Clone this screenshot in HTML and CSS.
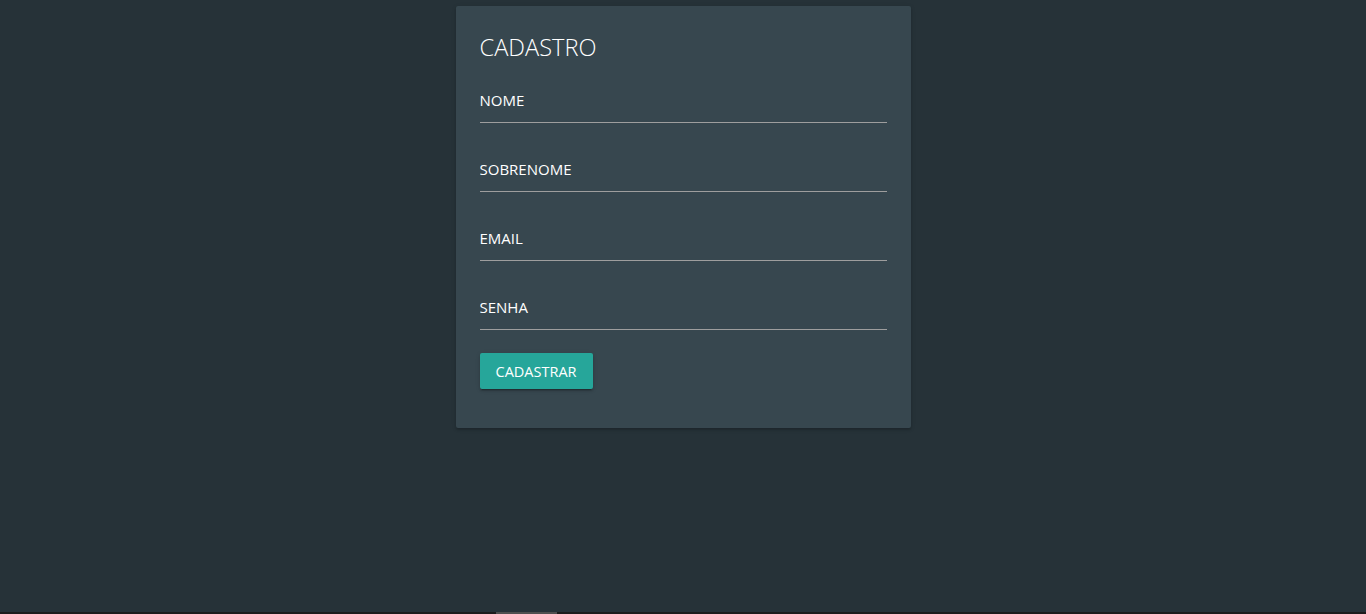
FILE: index.html
```html
<!DOCTYPE html>
<html lang="pt">
<head>
<meta charset="utf-8">
<title>Cadastro</title>
<link rel="stylesheet" href="styles.css">
</head>
<body>
<main class="page">
  <section class="card">
    <h1 class="card-title">CADASTRO</h1>
    <form class="form">
      <div class="field"><input class="input" type="text" placeholder="NOME"></div>
      <div class="field"><input class="input" type="text" placeholder="SOBRENOME"></div>
      <div class="field"><input class="input" type="email" placeholder="EMAIL"></div>
      <div class="field"><input class="input" type="password" placeholder="SENHA"></div>
      <button class="btn" type="button">CADASTRAR</button>
    </form>
  </section>
</main>
<div class="scrollbar"><div class="thumb"></div></div>
</body>
</html>
```
FILE: styles.css
```css
html, body {
  margin: 0;
  height: 100%;
  background: #263238;
  font-family: "Open Sans", "Noto Sans", sans-serif;
  color: #ffffff;
  overflow: hidden;
}
.page {
  display: flex;
  justify-content: center;
  padding-top: 6px;
}
.card {
  width: 455px;
  box-sizing: border-box;
  padding: 25px 24px 39px;
  background: #37474f;
  border-radius: 2px;
  box-shadow: 0 2px 2px rgba(0,0,0,0.14), 0 1px 5px rgba(0,0,0,0.12);
}
.card-title {
  margin: 0;
  font-size: 23.6px;
  font-weight: 300;
  line-height: 32px;
  color: #ffffff;
}
.form {
  display: flex;
  flex-direction: column;
  align-items: flex-start;
  gap: 23px;
  margin-top: 14px;
}
.field {
  width: 100%;
}
.input {
  display: block;
  width: 100%;
  height: 45px;
  box-sizing: content-box;
  padding: 0;
  margin: 0;
  border: none;
  border-bottom: 1px solid #9e9e9e;
  background: transparent;
  outline: none;
  font-family: inherit;
  font-size: 15px;
  color: #ffffff;
}
.input::placeholder {
  color: #ffffff;
  opacity: 1;
}
.btn {
  height: 36px;
  padding: 0 16px;
  border: none;
  border-radius: 2px;
  background: #26a69a;
  color: #ffffff;
  font-family: inherit;
  font-size: 14.5px;
  letter-spacing: 0;
  box-shadow: 0 2px 2px rgba(0,0,0,0.14), 0 1px 5px rgba(0,0,0,0.12), 0 3px 1px -2px rgba(0,0,0,0.2);
  cursor: pointer;
}
.scrollbar {
  position: fixed;
  left: 0;
  right: 0;
  bottom: 0;
  height: 2px;
  background: #1c1c1c;
}
.thumb {
  position: absolute;
  left: 496px;
  width: 61px;
  top: 0;
  bottom: 0;
  background: #4f4f4f;
}
```
